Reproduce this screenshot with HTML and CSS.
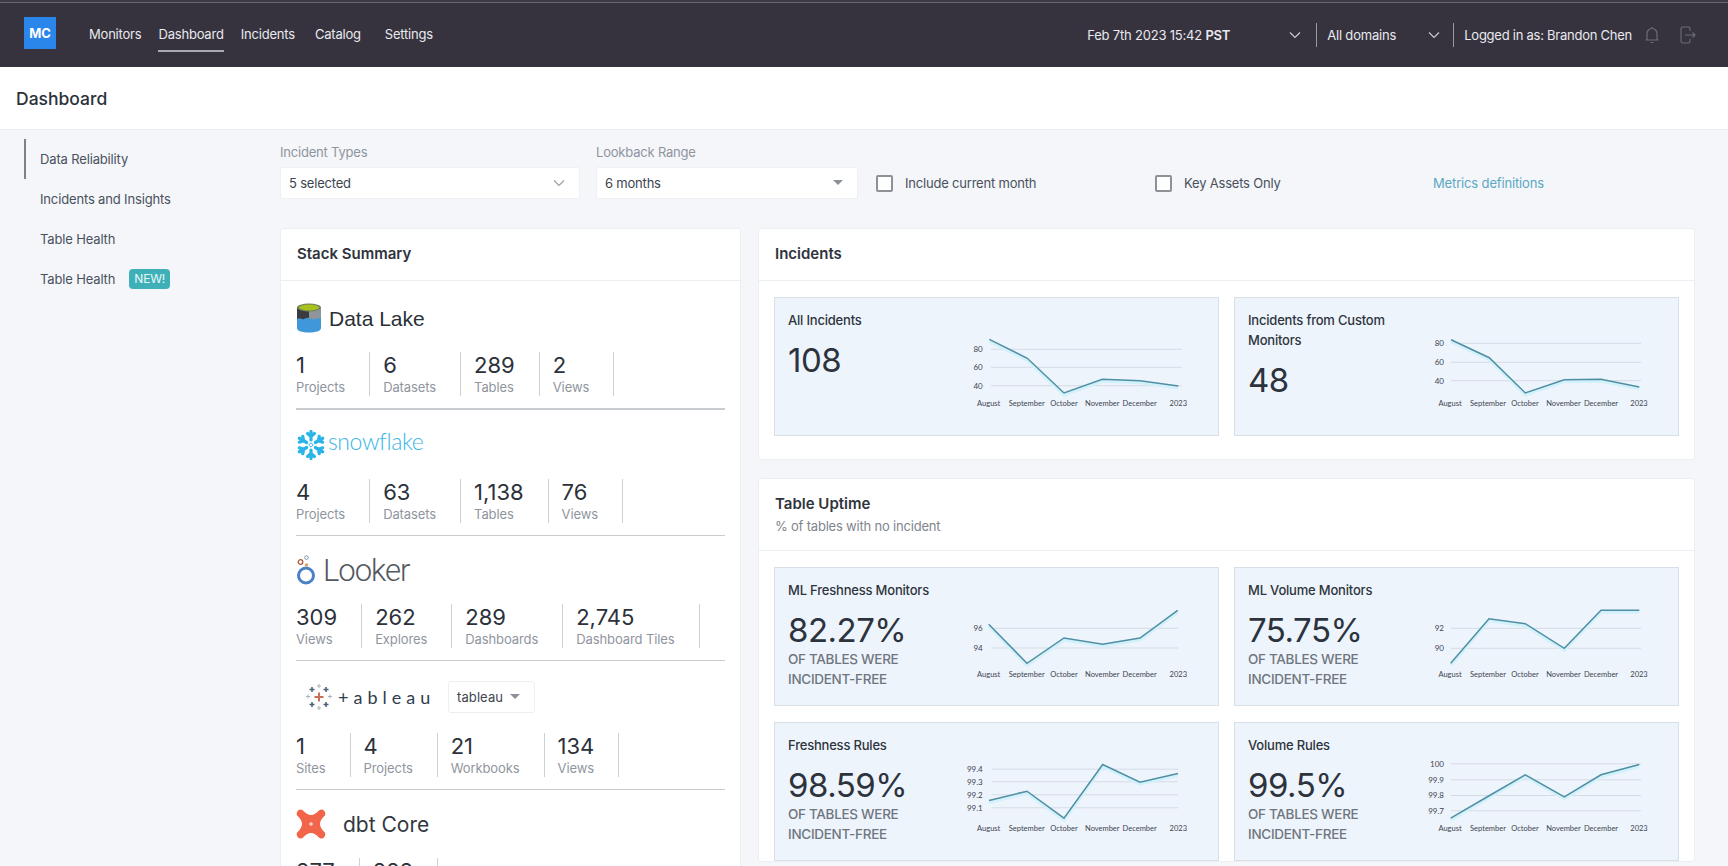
FILE: index.html
```html
<!DOCTYPE html>
<html lang="en">
<head>
<meta charset="utf-8">
<title>Dashboard</title>
<link rel="stylesheet" href="styles.css">
</head>
<body>
<div class="app">
  <header class="topbar">
    <div class="brand">MC</div>
    <nav class="nav">
      <a class="nav-link nav-monitors">Monitors</a>
      <a class="nav-link nav-dashboard is-active">Dashboard</a>
      <a class="nav-link nav-incidents">Incidents</a>
      <a class="nav-link nav-catalog">Catalog</a>
      <a class="nav-link">Settings</a>
    </nav>
    <div class="top-right">
      <span class="top-date">Feb 7th 2023 15:42 <b>PST</b></span>
      <svg class="top-chev" width="12" height="8" viewBox="0 0 12 8"><path d="M1 1.5l5 5 5-5"/></svg>
      <span class="top-div"></span>
      <span class="top-domain">All domains</span>
      <svg class="top-chev" width="12" height="8" viewBox="0 0 12 8"><path d="M1 1.5l5 5 5-5"/></svg>
      <span class="top-div top-div-last"></span>
      <span class="top-user">Logged in as: Brandon Chen</span>
      <svg class="top-bell" width="14" height="18" viewBox="0 0 14 18"><path d="M2 13.5V7.5a5 5 0 0 1 10 0v6M.5 14h13M5.5 16.5h3M7 1v1.5"/></svg>
      <svg class="top-exit" width="16" height="18" viewBox="0 0 16 18"><path d="M10 5V2.500a1.500 1.500 0 0 0-1.500-1.500h-6A1.500 1.500 0 0 0 1 2.500v13A1.500 1.500 0 0 0 2.500 17h6a1.500 1.500 0 0 0 1.500-1.500V13M5 9h10M12.500 6.500L15 9l-2.500 2.500"/></svg>
    </div>
  </header>

  <div class="page-head"><h1>Dashboard</h1></div>

  <div class="main">
    <aside class="side">
      <a class="side-item is-active">Data Reliability</a>
      <a class="side-item">Incidents and Insights</a>
      <a class="side-item">Table Health</a>
      <a class="side-item">Table Health <span class="badge">NEW!</span></a>
    </aside>

    <div class="content">
      <div class="filters">
        <div class="field field-types">
          <label>Incident Types</label>
          <div class="select">5 selected
            <svg class="sel-chev" width="12" height="8" viewBox="0 0 12 8"><path d="M1 1.500l5 5 5-5"/></svg>
          </div>
        </div>
        <div class="field field-range">
          <label>Lookback Range</label>
          <div class="select">6 months <span class="caret"></span></div>
        </div>
        <div class="check check-month"><span class="box"></span>Include current month</div>
        <div class="check check-key"><span class="box"></span>Key Assets Only</div>
        <a class="metrics">Metrics definitions</a>
      </div>

      <div class="columns">
        <section class="card">
          <div class="card-head"><h2>Stack Summary</h2></div>
          <div class="stack">
            <div class="stack-row stack-first">
              <div class="logo-row">
                <svg class="logo-lake" width="26" height="30" viewBox="0 0 26 30">
                  <path fill="#3a3b3e" d="M1 5h12v13H1z"/>
                  <path fill="#8e959b" d="M13 5h12v13H13z"/>
                  <path fill="#3f98da" d="M1 16c3-2 5 1 7 0s4-2 6-.5 5 .5 11-.5v10c0 3-5 4.500-12 4.500S1 28 1 25z"/>
                  <ellipse cx="13" cy="4.500" rx="12" ry="4" fill="#6f7f58"/>
                  <ellipse cx="13" cy="4.500" rx="10" ry="3" fill="#a8c21f"/>
                </svg>
                <span class="name-lake">Data Lake</span>
              </div>
              <div class="stats">
                <div class="stat"><b>1</b><span>Projects</span></div>
                <div class="stat"><b>6</b><span>Datasets</span></div>
                <div class="stat"><b>289</b><span>Tables</span></div>
                <div class="stat"><b>2</b><span>Views</span></div>
              </div>
            </div>

            <div class="stack-row">
              <div class="logo-row logo-row-snow">
                <svg class="logo-snow" width="32" height="30" viewBox="-16 -15 32 30">
                  <defs>
                    <g id="flake-arm"><path d="M0-5V-13.500M-3.400-11.500L0-8.500l3.400-3" /></g>
                  </defs>
                  <g fill="none" stroke="#29b5e8" stroke-width="3.200" stroke-linecap="round" stroke-linejoin="round">
                    <use href="#flake-arm"/>
                    <use href="#flake-arm" transform="rotate(60)"/>
                    <use href="#flake-arm" transform="rotate(120)"/>
                    <use href="#flake-arm" transform="rotate(180)"/>
                    <use href="#flake-arm" transform="rotate(240)"/>
                    <use href="#flake-arm" transform="rotate(300)"/>
                  </g>
                  <path d="M0-2.200L2.200 0 0 2.200-2.200 0z" fill="none" stroke="#29b5e8" stroke-width="1"/>
                </svg>
                <span class="name-snow">snowflake</span>
              </div>
              <div class="stats">
                <div class="stat"><b>4</b><span>Projects</span></div>
                <div class="stat"><b>63</b><span>Datasets</span></div>
                <div class="stat"><b>1,138</b><span>Tables</span></div>
                <div class="stat"><b>76</b><span>Views</span></div>
              </div>
            </div>

            <div class="stack-row">
              <div class="logo-row">
                <svg class="logo-looker" width="22" height="30" viewBox="0 0 22 30">
                  <circle cx="10" cy="20.500" r="7.500" fill="none" stroke="#4a80c8" stroke-width="3"/>
                  <circle cx="10.500" cy="10" r="1.800" fill="#d9a46a"/>
                  <circle cx="4.500" cy="7" r="2.300" fill="none" stroke="#b5563f" stroke-width="1.300"/>
                  <circle cx="10.500" cy="2.600" r="1.800" fill="none" stroke="#7d97a8" stroke-width="1"/>
                </svg>
                <span class="name-looker">Looker</span>
              </div>
              <div class="stats">
                <div class="stat"><b>309</b><span>Views</span></div>
                <div class="stat"><b>262</b><span>Explores</span></div>
                <div class="stat"><b>289</b><span>Dashboards</span></div>
                <div class="stat"><b>2,745</b><span>Dashboard Tiles</span></div>
              </div>
            </div>

            <div class="stack-row">
              <div class="logo-row logo-row-tableau">
                <svg class="logo-tableau" width="26" height="26" viewBox="0 0 26 26">
                  <path class="tb tb-red" d="M13 8.500v9M8.500 13h9"/>
                  <path class="tb tb-blue" d="M6 3v5M3.500 5.500h5M20 3v5M17.500 5.500h5M6 18v5M3.500 20.500h5M20 18v5M17.500 20.500h5"/>
                  <path class="tb tb-thin" d="M13 0v4M11 2h4M13 22v4M11 24h4M2 10.500v4M0 12.500h4M24 10.500v4M22 12.500h4"/>
                </svg>
                <span class="name-tableau">+ableau</span>
                <div class="select select-tableau">tableau <span class="caret"></span></div>
              </div>
              <div class="stats">
                <div class="stat"><b>1</b><span>Sites</span></div>
                <div class="stat"><b>4</b><span>Projects</span></div>
                <div class="stat"><b>21</b><span>Workbooks</span></div>
                <div class="stat"><b>134</b><span>Views</span></div>
              </div>
            </div>

            <div class="stack-row">
              <div class="logo-row">
                <svg class="logo-dbt" width="30" height="30" viewBox="0 0 30 30">
                  <path fill="#f2654a" stroke="#f2654a" stroke-width="2" stroke-linejoin="round" d="M3 2Q4 1 6 2Q15 12 24 2Q26 1 27 2Q29 4 28 6Q18 15 28 24Q29 26 27 28Q26 29 24 28Q15 18 6 28Q4 29 3 28Q1 26 2 24Q12 15 2 6Q1 4 3 2Z"/>
                  <circle cx="15" cy="15" r="1.800" fill="#fbd9d0"/>
                </svg>
                <span class="name-dbt">dbt Core</span>
              </div>
              <div class="stats">
                <div class="stat stat-dbt"><b>277</b></div>
                <div class="stat stat-dbt"><b>228</b></div>
              </div>
            </div>
          </div>
        </section>

        <div class="right">
          <section class="card card-incidents">
            <div class="card-head"><h2>Incidents</h2></div>
            <div class="tiles">
              <article class="tile">
                <div class="tile-text">
                  <h3>All Incidents</h3>
                  <div class="big">108</div>
                </div>
                <svg class="chart" width="240" height="100" viewBox="0 0 240 100">
                  <path class="grid" d="M31 32.300H222M31 50.300H222M31 68.700H222"/>
                  <text class="ylab" x="22.700" y="35">80</text><text class="ylab" x="22.700" y="53">60</text><text class="ylab" x="22.700" y="71.500">40</text>
                  <polyline class="glow" points="29.300,22.300 67.300,41.300 104,76 142.300,62.300 180,63.700 218.300,69"/>
                  <polyline class="line" points="29.300,22.300 67.300,41.300 104,76 142.300,62.300 180,63.700 218.300,69"/>
                  <text class="xlab" x="28.700" y="89">August</text><text class="xlab" x="66.700" y="89">September</text><text class="xlab" x="104" y="89">October</text><text class="xlab" x="142.300" y="89">November</text><text class="xlab" x="179.700" y="89">December</text><text class="xlab" x="218.300" y="89">2023</text>
                </svg>
              </article>
              <article class="tile">
                <div class="tile-text">
                  <h3>Incidents from Custom Monitors</h3>
                  <div class="big">48</div>
                </div>
                <svg class="chart" width="240" height="100" viewBox="0 0 240 100">
                  <path class="grid" d="M31 26.300H221M31 45.300H221M31 63.700H221"/>
                  <text class="ylab" x="24" y="29">80</text><text class="ylab" x="24" y="48">60</text><text class="ylab" x="24" y="66.500">40</text>
                  <polyline class="glow" points="31,22.700 69.300,40.700 105.300,76 144.300,62.700 181,62.300 219.300,70"/>
                  <polyline class="line" points="31,22.700 69.300,40.700 105.300,76 144.300,62.700 181,62.300 219.300,70"/>
                  <text class="xlab" x="30" y="89">August</text><text class="xlab" x="68" y="89">September</text><text class="xlab" x="105" y="89">October</text><text class="xlab" x="143.500" y="89">November</text><text class="xlab" x="181" y="89">December</text><text class="xlab" x="219" y="89">2023</text>
                </svg>
              </article>
            </div>
          </section>

          <section class="card card-uptime">
            <div class="card-head card-head-sub"><h2>Table Uptime</h2><p>% of tables with no incident</p></div>
            <div class="tiles">
              <article class="tile">
                <div class="tile-text">
                  <h3>ML Freshness Monitors</h3>
                  <div class="big">82.27%</div>
                  <p class="free">OF TABLES WERE INCIDENT-FREE</p>
                </div>
                <svg class="chart" width="240" height="100" viewBox="0 0 240 100">
                  <path class="grid" d="M31 41.300H218M31 61H218"/>
                  <text class="ylab" x="22.700" y="44">96</text><text class="ylab" x="22.700" y="64">94</text>
                  <polyline class="glow" points="28.700,37.300 67,76.300 104,51 142.700,57.300 180,51 217.700,23.300"/>
                  <polyline class="line" points="28.700,37.300 67,76.300 104,51 142.700,57.300 180,51 217.700,23.300"/>
                  <text class="xlab" x="28.700" y="89.500">August</text><text class="xlab" x="66.700" y="89.500">September</text><text class="xlab" x="104" y="89.500">October</text><text class="xlab" x="142.300" y="89.500">November</text><text class="xlab" x="179.700" y="89.500">December</text><text class="xlab" x="218.300" y="89.500">2023</text>
                </svg>
              </article>
              <article class="tile">
                <div class="tile-text">
                  <h3>ML Volume Monitors</h3>
                  <div class="big">75.75%</div>
                  <p class="free">OF TABLES WERE INCIDENT-FREE</p>
                </div>
                <svg class="chart" width="240" height="100" viewBox="0 0 240 100">
                  <path class="grid" d="M31 41.300H221M31 61.300H221"/>
                  <text class="ylab" x="24" y="44">92</text><text class="ylab" x="24" y="64">90</text>
                  <polyline class="glow" points="30.700,76.300 69,31.700 105.300,36.700 144.300,61.300 181,23.300 219.300,23.300"/>
                  <polyline class="line" points="30.700,76.300 69,31.700 105.300,36.700 144.300,61.300 181,23.300 219.300,23.300"/>
                  <text class="xlab" x="30" y="89.500">August</text><text class="xlab" x="68" y="89.500">September</text><text class="xlab" x="105" y="89.500">October</text><text class="xlab" x="143.500" y="89.500">November</text><text class="xlab" x="181" y="89.500">December</text><text class="xlab" x="219" y="89.500">2023</text>
                </svg>
              </article>
              <article class="tile">
                <div class="tile-text">
                  <h3>Freshness Rules</h3>
                  <div class="big">98.59%</div>
                  <p class="free">OF TABLES WERE INCIDENT-FREE</p>
                </div>
                <svg class="chart" width="240" height="100" viewBox="0 0 240 100">
                  <path class="grid" d="M31.700 27.200H218M31.700 39.800H218M31.700 52.800H218M31.700 65.800H218"/>
                  <text class="ylab" x="22.700" y="30">99.4</text><text class="ylab" x="22.700" y="42.600">99.3</text><text class="ylab" x="22.700" y="55.600">99.2</text><text class="ylab" x="22.700" y="68.600">99.1</text>
                  <polyline class="glow" points="29,58.500 67,49.200 104,76.200 142.700,22.500 180,40.200 218,31.500"/>
                  <polyline class="line" points="29,58.500 67,49.200 104,76.200 142.700,22.500 180,40.200 218,31.500"/>
                  <text class="xlab" x="28.700" y="89">August</text><text class="xlab" x="66.700" y="89">September</text><text class="xlab" x="104" y="89">October</text><text class="xlab" x="142.300" y="89">November</text><text class="xlab" x="179.700" y="89">December</text><text class="xlab" x="218.300" y="89">2023</text>
                </svg>
              </article>
              <article class="tile">
                <div class="tile-text">
                  <h3>Volume Rules</h3>
                  <div class="big">99.5%</div>
                  <p class="free">OF TABLES WERE INCIDENT-FREE</p>
                </div>
                <svg class="chart" width="240" height="100" viewBox="0 0 240 100">
                  <path class="grid" d="M31 21.800H221M31 37.800H221M31 53.500H221M31 68.800H221"/>
                  <text class="ylab" x="24" y="24.600">100</text><text class="ylab" x="24" y="40.600">99.9</text><text class="ylab" x="24" y="56.300">99.8</text><text class="ylab" x="24" y="71.600">99.7</text>
                  <polyline class="glow" points="30.700,76.200 68.700,54 105.300,32.800 144.300,54.800 181,32.800 219.300,22.500"/>
                  <polyline class="line" points="30.700,76.200 68.700,54 105.300,32.800 144.300,54.800 181,32.800 219.300,22.500"/>
                  <text class="xlab" x="30" y="89">August</text><text class="xlab" x="68" y="89">September</text><text class="xlab" x="105" y="89">October</text><text class="xlab" x="143.500" y="89">November</text><text class="xlab" x="181" y="89">December</text><text class="xlab" x="219" y="89">2023</text>
                </svg>
              </article>
            </div>
          </section>
        </div>
      </div>
    </div>
  </div>
</div>
</body>
</html>
```

FILE: styles.css
```css
* { box-sizing: border-box; }
html, body { margin: 0; padding: 0; }
body {
  font-family: "Inter", "Noto Sans", sans-serif;
  font-size: 13px;
  letter-spacing: -.2px;
  color: #3d4450;
  background: #f4f6fa;
}
h1, h2, h3, p { margin: 0; }

.app { height: 866px; overflow: hidden; display: flex; flex-direction: column; }

/* top bar */
.topbar {
  flex: 0 0 67px;
  display: flex;
  align-items: center;
  padding: 0 32px 0 24px;
  color: #e9e9ee;
  background: linear-gradient(#3d3c45 0 2px, #66666c 2px 3px, #36333f 3px);
}
.brand {
  width: 32px;
  height: 32px;
  margin-top: -1px;
  display: flex;
  align-items: center;
  justify-content: center;
  background: #2a86ea;
  color: #fff;
  font-weight: 700;
  font-size: 13px;
}
.nav { display: flex; align-items: center; margin-left: 33px; }
.nav-link { display: block; padding: 6px 0; line-height: 20px; margin-top: 3px; border-bottom: 2px solid transparent; }
.nav-monitors { margin-right: 17px; }
.nav-dashboard { margin-right: 17px; }
.nav-incidents { margin-right: 20px; }
.nav-catalog { margin-right: 24px; }
.nav-link.is-active { border-bottom-color: #a8a8b0; }

.top-right { margin-left: auto; margin-top: 2px; display: flex; align-items: center; }
.top-date { width: 202px; }
.top-date b { font-weight: 600; }
.top-chev { fill: none; stroke: #c9c9d0; stroke-width: 1.200; }
.top-div { width: 1px; height: 24px; margin: 0 10px 0 15px; background: #9a9aa2; }
.top-div-last { margin-left: 13px; }
.top-domain { width: 101px; }
.top-user { margin-right: 13px; letter-spacing: -.25px; }
.top-bell { fill: none; stroke: #6d6d76; stroke-width: 1.200; margin-right: 21px; }
.top-exit { fill: none; stroke: #6d6d76; stroke-width: 1.100; }

/* page header */
.page-head {
  flex: 0 0 63px;
  display: flex;
  align-items: center;
  padding-left: 16px;
  background: #fff;
  border-bottom: 1px solid #ebeef2;
}
.page-head h1 { font-size: 17.500px; font-weight: 500; letter-spacing: 0; color: #2c313a; }

/* main */
.main { flex: 1; min-height: 0; display: grid; grid-template-columns: 280px 1fr; }
.side { padding: 9px 0 0 24px; }
.side-item {
  display: flex;
  align-items: center;
  height: 40px;
  padding-left: 14px;
  border-left: 2px solid transparent;
  letter-spacing: -.15px;
  color: #4a515c;
}
.side-item.is-active { border-left-color: #7c8088; }
.badge {
  margin-left: 14px;
  padding: 0 5px;
  height: 20px;
  line-height: 20px;
  border-radius: 4px;
  background: #3fb0b8;
  color: #e8f8f8;
  font-size: 12px;
}

.content { padding: 14px 33px 0 0; min-width: 0; }

/* filters */
.filters { display: flex; align-items: flex-end; height: 55px; }
.field label { display: block; height: 16px; line-height: 16px; margin-bottom: 7px; color: #8f959e; }
.field-types { width: 300px; margin-right: 16px; }
.field-range { width: 262px; margin-right: 18px; }
.select {
  height: 32px;
  display: flex;
  align-items: center;
  justify-content: space-between;
  padding: 0 14px 1px 8px;
  background: #fff;
  border: 1px solid #eef0f4;
  border-radius: 2px;
  color: #3d4450;
}
.sel-chev { fill: none; stroke: #9aa0a8; stroke-width: 1.200; }
.caret {
  width: 0;
  height: 0;
  border-left: 5px solid transparent;
  border-right: 5px solid transparent;
  border-top: 5px solid #8c9199;
}
.check { display: flex; align-items: center; height: 32px; color: #4a515c; }
.check-month { width: 279px; }
.check-key { width: 278px; }
.box {
  width: 17px;
  height: 17px;
  margin-right: 12px;
  background: #fff;
  border: 2px solid #8e9298;
  border-radius: 2px;
}
.metrics { height: 32px; line-height: 32px; letter-spacing: -.15px; color: #5ba8c2; }

/* cards */
.columns { display: grid; grid-template-columns: 461px 937px; column-gap: 17px; margin-top: 29px; }
.card { background: #fff; border: 1px solid #ebeef2; border-radius: 3px; }
.card-head { height: 52px; padding: 0 0 2px 16px; display: flex; flex-direction: column; justify-content: center; border-bottom: 1px solid #ebeef2; }
.card-head h2 { font-size: 15px; font-weight: 600; letter-spacing: 0; color: #2f343c; }
.card-head-sub { height: 72px; }
.card-head-sub p { margin-top: 5px; color: #7f858e; }

/* stack */
.stack { padding: 0 15px; }
.stack-row { padding: 19px 0 12px; border-bottom: 1px solid #c9ccd1; }
.stack-first { padding-top: 22px; border-bottom-width: 2px; }
.logo-row { height: 30px; margin-bottom: 19px; display: flex; align-items: center; }
.logo-row-snow { height: 31px; }
.logo-row-tableau { height: 34px; padding-left: 10px; }
.logo-lake { margin-right: 7px; }
.name-lake { margin-top: 2px; font-family: "Liberation Sans", sans-serif; font-size: 21px; letter-spacing: 0; color: #2b3038; }
.logo-snow { margin-right: 1px; margin-left: -1px; }
.name-snow { margin-top: -8px; font-family: "Lato", sans-serif; font-weight: 300; font-size: 23px; letter-spacing: -.4px; color: #38b6e4; }
.logo-looker { margin-right: 5px; }
.name-looker { font-family: "Roboto", sans-serif; font-weight: 300; font-size: 31px; letter-spacing: -1px; color: #54595f; }
.logo-tableau { margin-right: 6px; }
.tb { fill: none; }
.tb-red { stroke: #c8705a; stroke-width: 2; }
.tb-blue { stroke: #4a5f78; stroke-width: 1.500; }
.tb-thin { stroke: #a9b3bd; stroke-width: 1; }
.name-tableau { width: 110px; font-family: "Lato", sans-serif; font-size: 18px; letter-spacing: 5px; color: #2f3d4f; }
.select-tableau { width: 87px; height: 32px; padding: 0 14px 1px 8px; border-color: #eceef2; border-radius: 3px; font-size: 13px; letter-spacing: .1px; }
.logo-dbt { margin-right: 17px; }
.name-dbt { font-size: 21px; letter-spacing: 0; color: #33383f; }

.stats { display: flex; height: 44px; }
.stat { display: flex; flex-direction: column; padding: 0 24px 0 13px; border-right: 1px solid #cdd0d4; }
.stat:first-child { padding-left: 0; }
.stat b { font-size: 22px; font-weight: 400; line-height: 26px; letter-spacing: 0; color: #2c313a; }
.stat span { line-height: 18px; letter-spacing: -.1px; color: #8f959e; }

/* right column */
.card-incidents { height: 232px; margin-bottom: 18px; }
.tiles {
  display: grid;
  grid-template-columns: 445px 445px;
  column-gap: 15px;
  row-gap: 16px;
  padding: 16px 16px 0 15px;
}
.tile {
  height: 139px;
  display: flex;
  align-items: flex-start;
  padding: 12px 0 0 13px;
  background: #eef4fc;
  border: 1px solid #d9dfe7;
}
.tile-text { flex: 0 0 172px; }
.tile h3 { font-size: 13px; font-weight: 500; line-height: 20px; color: #2e343d; }
.big { margin-top: 10px; font-size: 33px; line-height: 40px; letter-spacing: -.5px; color: #2c333d; }
.free { margin-top: -1px; font-size: 13.500px; font-weight: 500; line-height: 20px; letter-spacing: -.3px; color: #6f767f; }
.chart { flex: none; margin-top: 7px; letter-spacing: 0; }
.grid { fill: none; stroke: #d5dbe4; stroke-width: 1; }
.line { fill: none; stroke: #4f8fa3; stroke-width: 1.500; }
.glow { fill: none; stroke: #d2f1fa; stroke-width: 3; transform: translateY(2px); }
.ylab { font-family: "Lato", sans-serif; font-size: 8px; fill: #3d4450; text-anchor: end; }
.xlab { font-family: "Lato", sans-serif; font-size: 7.500px; fill: #3d4450; text-anchor: middle; }
```
